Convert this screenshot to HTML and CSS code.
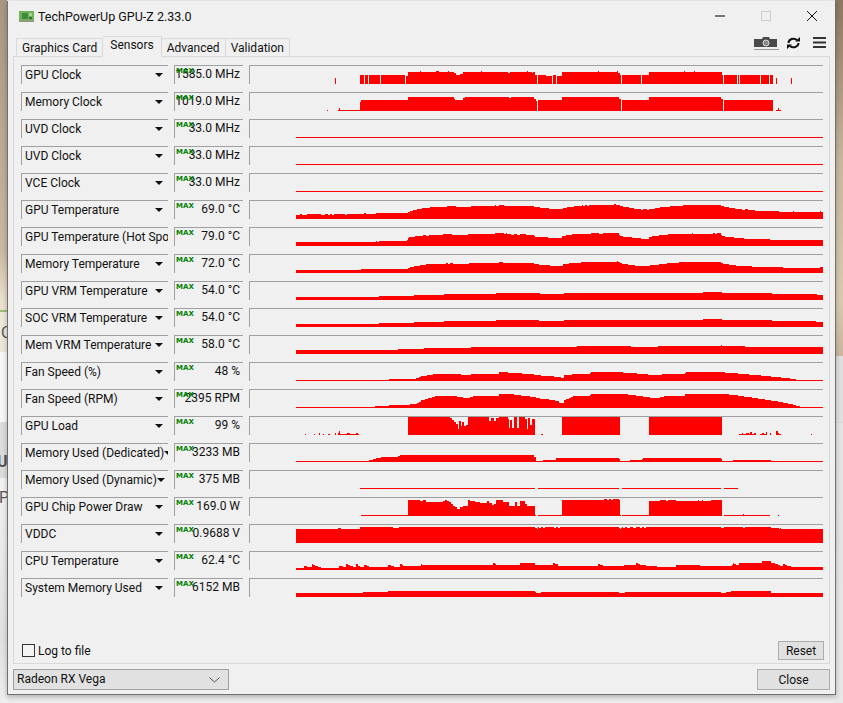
FILE: index.html
```html
<!DOCTYPE html>
<html lang="en">
<head>
  <meta charset="UTF-8" />
  <meta name="viewport" content="width=device-width, initial-scale=1.0"/>
  <title>TechPowerUp GPU-Z 2.33.0</title>
  <link rel="stylesheet" href="styles.css">
</head>
<body>
  <span class="behind behind-c">C</span>
  <span class="behind behind-u">U</span>
  <span class="behind behind-p">P</span>

  <div class="window">
    <div class="titlebar">
      <svg class="app-icon" width="15" height="11" viewBox="0 0 15 11">
        <rect width="15" height="11" fill="#6fb35a"/>
        <rect x="0" y="9" width="15" height="2" fill="#8f9a7c"/>
        <rect x="3" y="2" width="6" height="6" fill="#3f8a3c"/>
        <rect x="10" y="2" width="3" height="3" fill="#a9d08f"/>
        <rect x="10" y="6" width="3" height="2" fill="#2f6e36"/>
      </svg>
      <span class="app-title">TechPowerUp GPU-Z 2.33.0</span>
      <div class="win-controls">
        <svg class="win-btn" width="46" height="12" viewBox="0 0 46 12"><path d="M0 6H10" stroke="#000" fill="none"/></svg>
        <svg class="win-btn" width="46" height="12" viewBox="0 0 46 12"><rect x="0.5" y="1.5" width="9" height="9" stroke="#ccc" fill="none"/></svg>
        <svg class="win-btn" width="10" height="12" viewBox="0 0 10 12"><path d="M0 1L10 11M10 1L0 11" stroke="#111" fill="none"/></svg>
      </div>
    </div>

    <div class="tabbar">
      <div class="tab">Graphics Card</div>
      <div class="tab tab-active">Sensors</div>
      <div class="tab">Advanced</div>
      <div class="tab">Validation</div>
      <div class="tools">
        <svg class="tool-camera" width="25" height="13" viewBox="0 0 25 13">
          <path d="M0 2H8L9 0H15L16 2H23V10H0Z" fill="#4a4a4a"/>
          <circle cx="12" cy="6" r="3" fill="#8a8a8a" stroke="#d8d8d8"/>
          <path d="M0 12.5H25" stroke="#999"/>
        </svg>
        <svg class="tool-refresh" width="13" height="12" viewBox="0 0 13 12">
          <path d="M1.5 6A5 4.5 0 0 1 10 3M11.5 6A5 4.5 0 0 1 3 9" stroke="#111" stroke-width="2" fill="none"/>
          <path d="M8 4.5H13V0ZM5 7.5H0V12Z" fill="#111"/>
        </svg>
        <svg class="tool-menu" width="13" height="11" viewBox="0 0 13 11">
          <path d="M0 0H13V2H0ZM0 4.500H13V6.500H0ZM0 9H13V11H0Z" fill="#333"/>
        </svg>
      </div>
    </div>

    <div class="panel">
      <div class="sensor">
        <div class="combo"><span class="combo-name">GPU Clock</span><i class="arrow"></i></div>
        <div class="value"><b class="max">MAX</b>1585.0 MHz</div>
        <div class="graph"><svg viewBox="250 1 573 18"><path d="M335 19V13H336V19ZM360 19V10H364V19ZM365 19V10H368V19ZM369 19V10H380V19ZM381 19V10H405V19ZM406 19V11H408V7H420V6H421V7H436V6H439V7H448V6H449V7H454V8H456V10H460V9H463V7H481V6H482V7H508V8H510V7H527V6H528V7H532V8H533V7H535V10H537V19ZM538 19V10H546V11H552V19ZM553 19V10H556V19ZM557 19V11H562V7H598V6H599V7H617V6H618V8H620V10H621V19ZM622 19V10H641V19ZM642 19V10H649V7H684V6H685V7H694V6H695V7H722V10H723V19ZM724 19V10H737V19ZM738 19V10H739V19ZM740 19V10H760V19ZM761 19V10H769V19ZM770 19V10H773V19ZM776 19V13H777V19ZM791 19V13H792V19Z" /></svg></div>
      </div>
      <div class="sensor">
        <div class="combo"><span class="combo-name">Memory Clock</span><i class="arrow"></i></div>
        <div class="value"><b class="max">MAX</b>1019.0 MHz</div>
        <div class="graph"><svg viewBox="250 1 573 18"><path d="M327 19V18H328V19ZM338 19V18H339V16H340V18H360V10H361V8H408V5H454V7H455V8H463V6H465V5H509V6H511V5H534V7H536V9H537V19ZM538 19V8H562V5H619V7H621V19ZM622 19V8H649V5H721V7H723V19ZM724 19V8H773V19ZM776 19V18H778V16H779V18H781V19Z"/></svg></div>
      </div>
      <div class="sensor">
        <div class="combo"><span class="combo-name">UVD Clock</span><i class="arrow"></i></div>
        <div class="value"><b class="max">MAX</b>33.0 MHz</div>
        <div class="graph"><svg viewBox="250 1 573 18"><path d="M296 18H823V19H296Z"/></svg></div>
      </div>
      <div class="sensor">
        <div class="combo"><span class="combo-name">UVD Clock</span><i class="arrow"></i></div>
        <div class="value"><b class="max">MAX</b>33.0 MHz</div>
        <div class="graph"><svg viewBox="250 1 573 18"><path d="M296 18H823V19H296Z"/></svg></div>
      </div>
      <div class="sensor">
        <div class="combo"><span class="combo-name">VCE Clock</span><i class="arrow"></i></div>
        <div class="value"><b class="max">MAX</b>33.0 MHz</div>
        <div class="graph"><svg viewBox="250 1 573 18"><path d="M296 18H823V19H296Z"/></svg></div>
      </div>
      <div class="sensor">
        <div class="combo"><span class="combo-name">GPU Temperature</span><i class="arrow"></i></div>
        <div class="value"><b class="max">MAX</b>69.0 °C</div>
        <div class="graph"><svg viewBox="250 1 573 18"><path d="M296 19V15H300V14H302V15H307V14H321V15H325V14H328V15H330V14H332V15H334V14H345V15H347V14H364V13H366V14H376V13H408V12H410V11H413V10H417V9H422V8H430V7H447V6H456V7H471V6H495V5H496V6H499V5H504V6H534V7H540V8H549V9H563V8H567V7H574V6H582V5H583V6H585V5H587V6H589V5H614V4H616V5H620V6H623V7H629V8H634V9H641V10H643V9H647V10H649V9H655V8H660V7H670V6H683V5H721V6H724V7H729V8H735V9H742V10H745V9H748V10H755V11H779V12H793V11H794V12H820V11H821V12H823V19Z"/></svg></div>
      </div>
      <div class="sensor">
        <div class="combo"><span class="combo-name">GPU Temperature (Hot Spot)</span><i class="arrow"></i></div>
        <div class="value"><b class="max">MAX</b>79.0 °C</div>
        <div class="graph"><svg viewBox="250 1 573 18"><path d="M296 19V15H376V14H377V15H379V14H407V13H408V11H409V10H415V9H423V8H426V9H429V8H443V7H452V8H468V7H495V6H504V7H506V6H507V7H511V8H514V7H517V8H520V7H526V8H534V9H535V10H548V11H562V9H566V8H572V7H591V6H599V7H603V6H619V8H620V9H623V10H632V11H641V12H649V10H652V9H659V8H668V7H692V6H693V7H713V6H715V7H717V6H721V8H722V9H725V10H734V11H744V12H770V13H823V19Z"/></svg></div>
      </div>
      <div class="sensor">
        <div class="combo"><span class="combo-name">Memory Temperature</span><i class="arrow"></i></div>
        <div class="value"><b class="max">MAX</b>72.0 °C</div>
        <div class="graph"><svg viewBox="250 1 573 18"><path d="M296 19V16H361V15H408V14H410V13H414V12H420V11H426V10H446V9H448V10H450V9H453V10H469V9H499V8H503V9H534V10H539V11H550V12H563V10H569V9H581V8H617V7H618V8H620V9H622V10H628V11H635V12H650V11H659V10H667V9H679V8H721V9H723V10H729V11H736V12H752V13H783V14H820V13H823V19Z"/></svg></div>
      </div>
      <div class="sensor">
        <div class="combo"><span class="combo-name">GPU VRM Temperature</span><i class="arrow"></i></div>
        <div class="value"><b class="max">MAX</b>54.0 °C</div>
        <div class="graph"><svg viewBox="250 1 573 18"><path d="M296 19V16H379V15H414V14H444V13H496V12H540V13H564V12H703V11H722V12H772V13H817V14H823V19Z"/></svg></div>
      </div>
      <div class="sensor">
        <div class="combo"><span class="combo-name">SOC VRM Temperature</span><i class="arrow"></i></div>
        <div class="value"><b class="max">MAX</b>54.0 °C</div>
        <div class="graph"><svg viewBox="250 1 573 18"><path d="M296 19V16H379V15H414V14H444V13H496V12H539V13H564V12H703V11H722V12H772V13H816V14H823V19Z"/></svg></div>
      </div>
      <div class="sensor">
        <div class="combo"><span class="combo-name">Mem VRM Temperature</span><i class="arrow"></i></div>
        <div class="value"><b class="max">MAX</b>58.0 °C</div>
        <div class="graph"><svg viewBox="250 1 573 18"><path d="M296 19V15H398V14H424V13H471V12H577V11H631V12H658V11H721V10H722V11H745V12H823V19Z"/></svg></div>
      </div>
      <div class="sensor">
        <div class="combo"><span class="combo-name">Fan Speed (%)</span><i class="arrow"></i></div>
        <div class="value"><b class="max">MAX</b>48 %</div>
        <div class="graph"><svg viewBox="250 1 573 18"><path d="M296 19V18H389V17H416V16H419V15H421V14H427V13H433V12H461V13H471V12H499V10H508V11H522V12H534V13H541V14H554V15H561V16H564V13H572V12H590V11H591V10H623V11H637V12H648V13H662V12H685V11H686V10H725V11H738V12H749V13H761V14H771V15H781V16H790V17H796V18H823V19Z"/></svg></div>
      </div>
      <div class="sensor">
        <div class="combo"><span class="combo-name">Fan Speed (RPM)</span><i class="arrow"></i></div>
        <div class="value"><b class="max">MAX</b>2395 RPM</div>
        <div class="graph"><svg viewBox="250 1 573 18"><path d="M296 19V18H375V17H389V16H410V15H417V14H419V13H421V11H425V10H428V9H432V8H435V7H457V8H463V9H470V8H473V7H499V5H514V6H521V7H530V8H536V9H540V10H549V11H555V12H559V14H564V11H566V10H569V9H571V8H573V7H590V6H591V5H628V6H636V7H643V8H650V9H660V8H664V7H685V5H729V6H738V7H744V8H752V9H758V10H765V11H771V12H778V13H783V14H788V15H793V16H796V17H800V18H823V19Z"/></svg></div>
      </div>
      <div class="sensor">
        <div class="combo"><span class="combo-name">GPU Load</span><i class="arrow"></i></div>
        <div class="value"><b class="max">MAX</b>99 %</div>
        <div class="graph"><svg viewBox="250 1 573 18"><path d="M305 19V18H306V19ZM314 19V18H315V19ZM319 19V17H320V19ZM323 19V18H324V19ZM328 19V18H330V19ZM335 19V17H336V19ZM338 19V17H339V15H340V18H347V17H350V18H356V17H358V18H359V19ZM408 19V1H450V2H452V4H454V6H456V8H458V13H459V5H461V10H462V6H464V10H466V9H468V1H489V5H491V2H494V5H496V2H499V1H508V3H509V12H510V4H512V12H514V1H517V12H519V1H525V3H527V13H528V2H530V9H532V3H535V19ZM541 19V18H543V19ZM562 19V1H620V19ZM649 19V1H722V19ZM739 19V18H742V17H743V18H746V17H749V18H750V16H752V18H754V17H756V19ZM760 19V18H762V17H764V18H766V16H767V19ZM770 19V17H771V19ZM776 19V15H778V17H779V18H781V19ZM811 19V18H812V19Z"/></svg></div>
      </div>
      <div class="sensor">
        <div class="combo"><span class="combo-name">Memory Used (Dedicated)</span><i class="arrow"></i></div>
        <div class="value"><b class="max">MAX</b>3233 MB</div>
        <div class="graph"><svg viewBox="250 1 573 18"><path d="M296 19V18H369V17H373V16H376V15H381V14H398V13H400V12H534V14H536V18H543V17H556V15H619V16H620V18H630V17H642V16H643V15H721V16H722V18H733V17H771V18H823V19Z"/></svg></div>
      </div>
      <div class="sensor">
        <div class="combo"><span class="combo-name">Memory Used (Dynamic)</span><i class="arrow"></i></div>
        <div class="value"><b class="max">MAX</b>375 MB</div>
        <div class="graph"><svg viewBox="250 1 573 18"><path d="M360 18H535V19H360ZM538 18H619V19H538ZM622 18H721V19H622ZM724 18H738V19H724Z"/></svg></div>
      </div>
      <div class="sensor">
        <div class="combo"><span class="combo-name">GPU Chip Power Draw</span><i class="arrow"></i></div>
        <div class="value"><b class="max">MAX</b>169.0 W</div>
        <div class="graph"><svg viewBox="250 1 573 18"><path d="M361 19V18H408V3H420V4H423V3H426V5H443V4H445V3H447V4H449V5H451V7H453V9H455V10H457V12H460V10H463V9H468V3H470V4H475V5H480V6H487V4H489V6H492V8H494V7H496V3H503V5H509V9H515V5H517V9H520V4H525V7H527V9H535V18H536V19ZM538 19V18H562V3H604V2H607V3H609V2H611V3H613V2H619V3H620V18H621V19ZM622 19V18H649V4H660V3H666V4H668V3H676V4H698V3H699V4H702V3H703V4H711V3H722V19ZM724 19V18H743V17H744V18H770V19ZM778 19V18H779V19Z"/></svg></div>
      </div>
      <div class="sensor">
        <div class="combo"><span class="combo-name">VDDC</span><i class="arrow"></i></div>
        <div class="value"><b class="max">MAX</b>0.9688 V</div>
        <div class="graph"><svg viewBox="250 1 573 18"><path d="M296 19V5H338V4H341V5H360V3H393V4H399V3H535V4H537V5H538V3H539V4H541V3H543V4H545V3H554V4H556V3H558V4H560V3H619V4H620V5H621V4H622V3H623V4H625V3H627V4H630V3H633V4H636V3H640V4H642V3H644V4H646V3H721V4H724V3H743V4H745V3H771V4H779V5H780V4H781V5H823V19Z"/></svg></div>
      </div>
      <div class="sensor">
        <div class="combo"><span class="combo-name">CPU Temperature</span><i class="arrow"></i></div>
        <div class="value"><b class="max">MAX</b>62.4 °C</div>
        <div class="graph"><svg viewBox="250 1 573 18"><path d="M296 19V17H304V15H307V16H312V13H313V14H315V15H318V16H321V17H339V15H343V16H346V13H348V14H350V15H353V16H356V13H358V15H360V16H364V14H367V15H369V16H388V14H391V15H394V16H400V13H402V14H403V15H421V13H422V14H493V12H495V13H496V14H520V12H535V14H553V12H555V13H558V15H564V15H598V13H600V14H603V15H624V14H636V12H638V13H640V14H646V15H657V16H676V14H700V15H732V14H733V12H734V13H736V14H739V12H762V10H771V12H775V13H778V14H780V15H783V13H785V14H787V15H791V16H823V19Z"/></svg></div>
      </div>
      <div class="sensor">
        <div class="combo"><span class="combo-name">System Memory Used</span><i class="arrow"></i></div>
        <div class="value"><b class="max">MAX</b>6152 MB</div>
        <div class="graph"><svg viewBox="250 1 573 18"><path d="M296 19V15H363V14H388V13H535V14H536V15H541V14H619V15H625V14H721V15H726V14H731V13H771V15H823V19Z"/></svg></div>
      </div>

      <div class="panel-foot">
        <label class="log"><i class="checkbox"></i>Log to file</label>
        <button class="btn btn-reset">Reset</button>
      </div>
    </div>

    <div class="footer">
      <div class="gpu-select">
        Radeon RX Vega
        <svg width="11" height="6" viewBox="0 0 11 6"><path d="M0.500 0.500L5.500 5L10.500 0.500" stroke="#555" fill="none"/></svg>
      </div>
      <button class="btn btn-close">Close</button>
    </div>
  </div>
</body>
</html>
```

FILE: styles.css
```css
body {
  font-family: Roboto, "Liberation Sans", sans-serif;
  font-size: 12px;
  margin: 0;
  height: 703px;
  overflow: hidden;
  position: relative;
  color: #111;
  background:
    linear-gradient(to bottom, #a99680 0, #c9b8a2 250px, #e9e0cd 300px, #e9e0cd 310px, #9dbb78 310px, #9dbb78 312px, #ece8d8 312px, #ece8d8 352px, #f7f7f7 352px, #f7f7f7 422px, #dcdcdc 422px, #dcdcdc 478px, #f2f2f2 478px, #e0e0e0 640px, #eeeeee 703px) left top / 7px 100% no-repeat,
    linear-gradient(to bottom, #8d7760 0, #c9b8a0 160px, #d9cbb2 300px, #cbb89e 356px, #e0e0e0 356px, #e0e0e0 422px, #cccccc 422px, #e4e4e4 423px, #e8e8e8 703px) right top / 8px 100% no-repeat,
    #ececec;
}

.behind {
  position: absolute;
  left: 1px;
  color: #555;
  font-size: 16px;
}

.behind-c { top: 323px; }
.behind-u { top: 452px; left: -3px; font-weight: bold; }
.behind-p { top: 488px; left: -1px; }

.window {
  position: absolute;
  left: 7px;
  top: 1px;
  width: 827px;
  height: 693px;
  background: #f0f0f0;
  border: 1px solid #707070;
  border-top: none;
  box-shadow: 0 2px 5px rgba(0, 0, 0, 0.25);
  display: flex;
  flex-direction: column;
}

.titlebar {
  height: 35px;
  flex: none;
  display: flex;
  align-items: flex-start;
  padding-left: 11px;
  padding-top: 9px;
  box-sizing: border-box;
}

.app-icon {
  margin-top: 1px;
}

.app-title {
  margin-left: 4px;
  font-size: 12.5px;
  line-height: 14px;
}

.win-controls {
  margin-left: auto;
  margin-right: 18px;
  display: flex;
  gap: 0;
}

.win-btn {
  display: block;
}

.tabbar {
  height: 20px;
  flex: none;
  display: flex;
  align-items: flex-end;
  padding-left: 8px;
  position: relative;
  z-index: 1;
}

.tab {
  height: 18px;
  line-height: 18px;
  padding: 0 5px;
  background: #f0f0f0;
  border: 1px solid #d9d9d9;
  border-bottom: none;
  border-left: none;
  box-sizing: border-box;
}

.tab:first-child {
  border-left: 1px solid #d9d9d9;
}

.tab-active {
  height: 21px;
  line-height: 17px;
  margin-bottom: -1px;
  border-left: none;
  padding: 0 7px;
}

.tools {
  margin-left: auto;
  margin-right: 9px;
  margin-bottom: 6px;
  display: flex;
  align-items: flex-start;
  gap: 8px;
}

.tool-refresh {
  margin-left: 0;
}

.tool-menu {
  margin-left: 5px;
}

.panel {
  height: 608px;
  flex: none;
  margin: 0 5px 0 5px;
  border: 1px solid #d9d9d9;
  box-sizing: border-box;
  padding: 8px 5px 3px 7px;
  display: flex;
  flex-direction: column;
  gap: 8px;
}

.sensor {
  display: flex;
  gap: 6px;
  height: 19px;
  flex: none;
}

.combo,
.value,
.graph {
  box-sizing: border-box;
  border-top: 1px solid #a0a0a0;
  border-left: 1px solid #a0a0a0;
  height: 19px;
}

.combo {
  width: 147px;
  display: flex;
  align-items: center;
  padding: 0 5px 0 3px;
  white-space: nowrap;
  overflow: hidden;
}

.combo-name {
  flex: 1;
}

.arrow {
  flex: none;
  width: 0;
  height: 0;
  border-left: 4px solid transparent;
  border-right: 4px solid transparent;
  border-top: 4px solid #111;
}

.value {
  width: 69px;
  position: relative;
  text-align: right;
  padding-right: 3px;
  line-height: 17px;
  white-space: nowrap;
}

.max {
  position: absolute;
  left: 1px;
  top: 1px;
  font-size: 7px;
  line-height: 8px;
  font-weight: 700;
  color: #008000;
  font-family: "DejaVu Sans", sans-serif;
  letter-spacing: 0;
}

.graph {
  width: 574px;
}

.graph svg {
  display: block;
  width: 573px;
  height: 18px;
}

.graph path {
  fill: #ff0000;
  shape-rendering: crispEdges;
}

.panel-foot {
  margin-top: auto;
  display: flex;
  justify-content: space-between;
  align-items: center;
  padding-left: 1px;
}

.log {
  display: flex;
  align-items: center;
  gap: 3px;
}

.checkbox {
  width: 13px;
  height: 13px;
  box-sizing: border-box;
  border: 1px solid #333;
  background: #f4f4f4;
}

.btn {
  font: inherit;
  color: #111;
  background: #e1e1e1;
  border: 1px solid #adadad;
  padding: 0;
  box-sizing: border-box;
}

.btn-reset {
  width: 46px;
  height: 19px;
}

.btn-close {
  width: 73px;
  height: 21px;
}

.footer {
  flex: 1;
  display: flex;
  justify-content: space-between;
  padding: 5px 5px 0 5px;
  align-items: flex-start;
}

.gpu-select {
  width: 216px;
  height: 21px;
  box-sizing: border-box;
  background: #e1e1e1;
  border: 1px solid #a0a0a0;
  padding: 0 8px 0 3px;
  line-height: 19px;
  display: flex;
  justify-content: space-between;
  align-items: center;
}
```
